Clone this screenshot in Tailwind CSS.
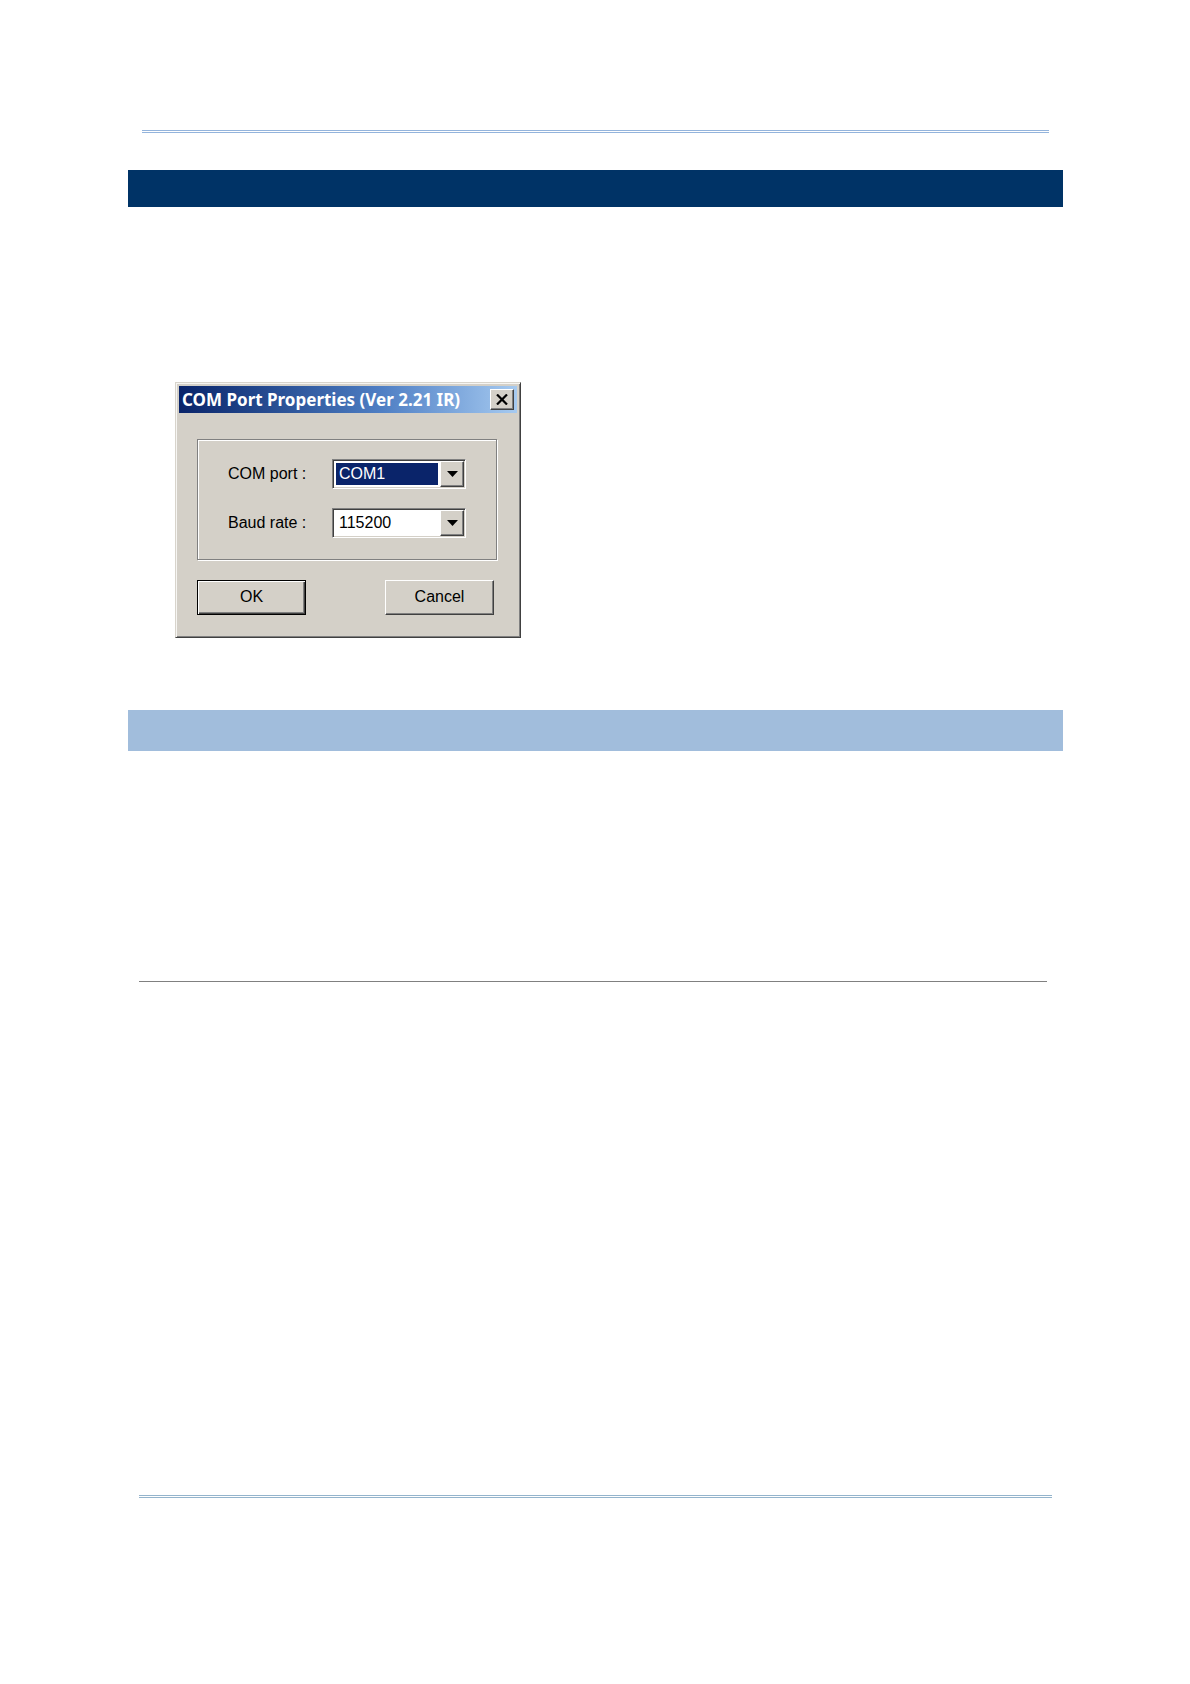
<!DOCTYPE html>
<html lang="en">
<head>
    <meta charset="utf-8">
    <meta name="viewport" content="width=device-width, initial-scale=1">
    <title>COM Port Properties</title>
    <script src="https://cdn.jsdelivr.net/npm/@tailwindcss/browser@4"></script>
</head>
<body class="bg-white text-black font-['Liberation_Sans',sans-serif]">
<div class="pt-[130px] pb-[186px] pl-32 pr-[127px]">
    <header>
        <hr class="mx-[14px] h-[3px] border-y border-[#94b4dc]">
        <div class="mt-[37px] h-[37px] bg-[#003366]"></div>
    </header>

    <main>
        <form class="mt-[175px] ml-[47px] w-[346px] bg-[#d4d0c8] border border-t-[#d8d4cc] border-l-[#d8d4cc] border-r-[#404040] border-b-[#404040] shadow-[inset_1px_1px_0_#f6f5f2,inset_-1px_-1px_0_#808080] p-[3px] pb-[22px]" aria-labelledby="dialog-title">
            <div class="flex items-center justify-between h-[27px] pl-[3px] pr-[3px] bg-linear-to-r from-[#0a246a] via-[#4f7fc4] via-60% to-[#a6caf0]">
                <h1 id="dialog-title" class="text-white font-bold text-[17px] leading-none whitespace-nowrap font-['Noto_Sans',sans-serif]">COM Port Properties (Ver 2.21 IR)</h1>
                <button type="button" aria-label="Close" class="flex items-center justify-center shrink-0 w-6 h-[21px] bg-[#d4d0c8] border border-t-white border-l-white border-r-[#404040] border-b-[#404040] shadow-[inset_-1px_-1px_0_#808080]">
                    <svg class="w-3 h-[11px]" viewBox="0 0 12 11" stroke="#000" stroke-width="2.2" fill="none">
                        <path d="M1 .5l10 10M11 .5l-10 10"/>
                    </svg>
                </button>
            </div>

            <div class="mt-[26px] ml-[18px] mr-5 border border-[#808080] shadow-[inset_1px_1px_0_#fff,1px_1px_0_#fff] pt-[19px] pb-[21px] px-[30px] flex flex-col gap-[19px]">
                <div class="flex items-center justify-between">
                    <label for="port" class="w-[77px] text-right text-base whitespace-nowrap">COM port :</label>
                    <div class="relative w-[134px] h-[30px] bg-white border border-t-[#808080] border-l-[#808080] border-r-white border-b-white shadow-[inset_1px_1px_0_#404040,inset_-1px_-1px_0_#d4d0c8] p-[3px]">
                        <select id="port" class="appearance-none block w-[102px] h-[22px] pl-[3px] bg-[#0a246a] text-white text-base leading-none outline-none">
                            <option>COM1</option>
                            <option>COM2</option>
                        </select>
                        <span class="pointer-events-none absolute top-px right-px bottom-px w-6 flex items-center justify-center bg-[#d4d0c8] border border-t-white border-l-white border-r-[#404040] border-b-[#404040] shadow-[inset_-1px_-1px_0_#808080]">
                            <svg class="w-[11px] h-[6px]" viewBox="0 0 11 6"><path d="M0 0h11L5.500 6z"/></svg>
                        </span>
                    </div>
                </div>
                <div class="flex items-center justify-between">
                    <label for="baud" class="w-[77px] text-right text-base whitespace-nowrap">Baud rate :</label>
                    <div class="relative w-[134px] h-[30px] bg-white border border-t-[#808080] border-l-[#808080] border-r-white border-b-white shadow-[inset_1px_1px_0_#404040,inset_-1px_-1px_0_#d4d0c8] p-[3px]">
                        <select id="baud" class="appearance-none block w-[102px] h-[22px] pl-[3px] bg-white text-black text-base leading-none outline-none">
                            <option>115200</option>
                            <option>57600</option>
                        </select>
                        <span class="pointer-events-none absolute top-px right-px bottom-px w-6 flex items-center justify-center bg-[#d4d0c8] border border-t-white border-l-white border-r-[#404040] border-b-[#404040] shadow-[inset_-1px_-1px_0_#808080]">
                            <svg class="w-[11px] h-[6px]" viewBox="0 0 11 6"><path d="M0 0h11L5.500 6z"/></svg>
                        </span>
                    </div>
                </div>
            </div>

            <div class="mt-5 ml-[18px] mr-[23px] flex justify-between">
                <button type="submit" class="w-[109px] h-[35px] text-base pb-[2px] bg-[#d4d0c8] border border-black shadow-[inset_1px_1px_0_#fff,inset_-1px_-1px_0_#404040,inset_-2px_-2px_0_#808080]">OK</button>
                <button type="button" class="w-[109px] h-[35px] text-base pb-[2px] bg-[#d4d0c8] border border-t-white border-l-white border-r-[#404040] border-b-[#404040] shadow-[inset_-1px_-1px_0_#808080]">Cancel</button>
            </div>
        </form>

        <div class="mt-[72px] h-[41px] bg-[#a1bddc]"></div>
        <hr class="mt-[230px] ml-[11px] mr-4 border-t border-[#808080]">
    </main>

    <footer class="mt-[513px] mx-[11px]">
        <hr class="h-[3px] border-y border-[#94b4cc]">
    </footer>
</div>
</body>
</html>
